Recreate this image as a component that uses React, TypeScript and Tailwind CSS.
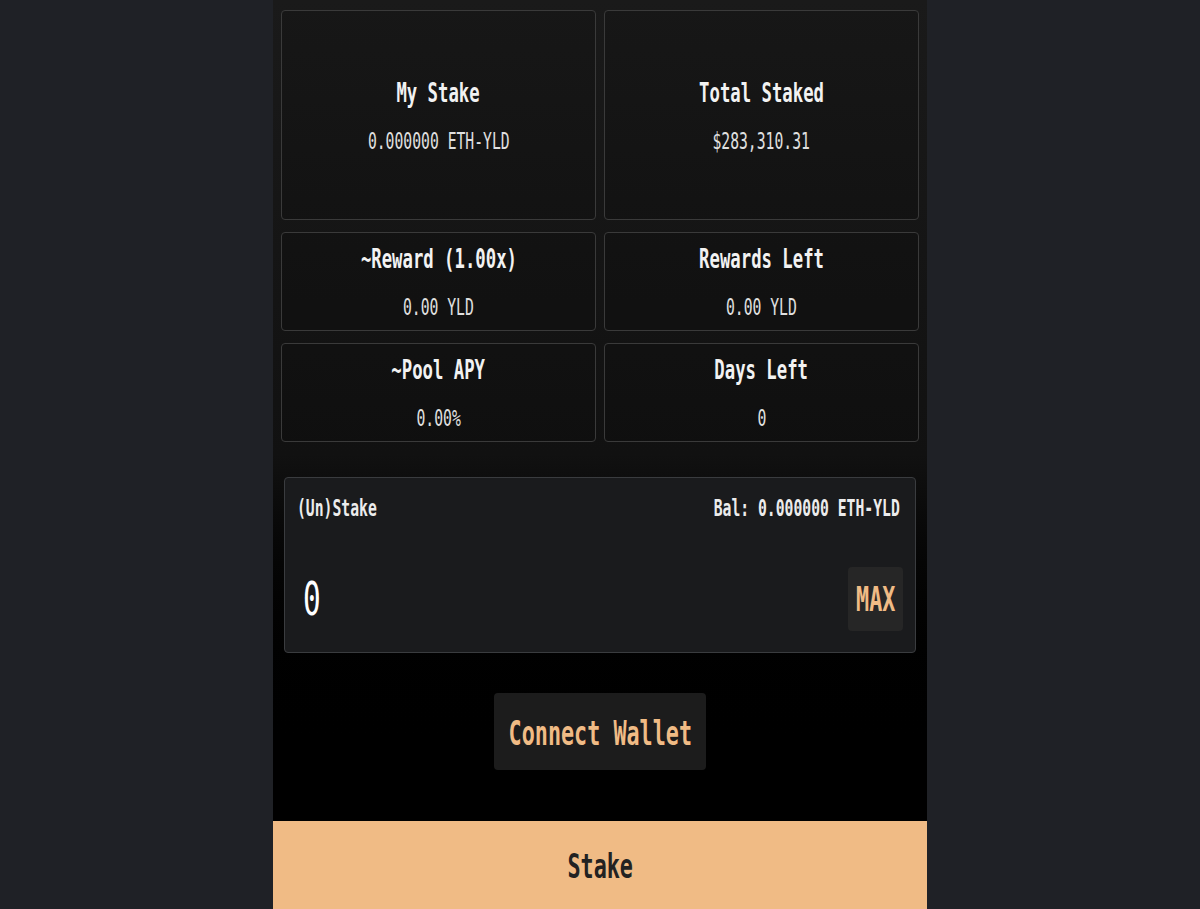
import type { ReactNode } from "react"

const mono = "font-['DejaVu_Sans_Mono','Liberation_Mono',monospace]"

// narrow mono text: the glyphs are squeezed horizontally
function Narrow({ children, className = "" }: { children: ReactNode; className?: string }) {
  return <span className={`inline-block scale-x-[0.64] whitespace-nowrap ${className}`}>{children}</span>
}

function StatCard({ title, value, tall = false }: { title: string; value: string; tall?: boolean }) {
  return (
    <div
      className={`flex flex-col items-center justify-center rounded-sm border border-[#3a3a3a] bg-black/10 ${
        tall ? "h-[210px]" : "h-[99px]"
      }`}
    >
      <div className="text-[27px] font-bold leading-[30px] text-[#f2f2f2]">
        <Narrow>{title}</Narrow>
      </div>
      <div className="mt-[21px] text-[23px] leading-[24px] text-[#e0e0e0]">
        <Narrow>{value}</Narrow>
      </div>
    </div>
  )
}

export default function App() {
  return (
    <div className={`min-h-[909px] bg-[#1f2126] ${mono}`}>
      <div className="mx-auto flex min-h-[909px] w-[654px] flex-col bg-linear-to-b from-[#1a1a1a] via-[#111111] via-50% to-black to-[84%]">
        {/* Stats */}
        <div className="flex flex-col gap-[12px] px-2 pt-[10px]">
          <div className="grid grid-cols-2 gap-2">
            <StatCard title="My Stake" value="0.000000 ETH-YLD" tall />
            <StatCard title="Total Staked" value="$283,310.31" tall />
          </div>
          <div className="grid grid-cols-2 gap-2">
            <StatCard title="~Reward (1.00x)" value="0.00 YLD" />
            <StatCard title="Rewards Left" value="0.00 YLD" />
          </div>
          <div className="grid grid-cols-2 gap-2">
            <StatCard title="~Pool APY" value="0.00%" />
            <StatCard title="Days Left" value="0" />
          </div>
        </div>

        {/* (Un)Stake input */}
        <div className="mx-[11px] mt-[35px] rounded-sm border border-[#3a3c3f] bg-[#1a1b1d] pb-[21px]">
          <div className="flex items-center justify-between pl-[12px] pr-[15px] pt-[18px] text-[23px] font-bold leading-[24px] text-[#ececec]">
            <Narrow className="origin-left">(Un)Stake</Narrow>
            <Narrow className="origin-right">Bal: 0.000000 ETH-YLD</Narrow>
          </div>
          <div className="mt-[47px] flex items-center justify-between px-[12px]">
            <div className="ml-[6px] text-[46px] leading-[50px] text-white">
              <Narrow className="origin-left">0</Narrow>
            </div>
            <button className="flex h-[64px] w-[55px] items-center justify-center rounded-sm bg-[#262626] text-[34px] font-bold leading-none text-[#f0bb85]">
              <Narrow>MAX</Narrow>
            </button>
          </div>
        </div>

        {/* Wallet */}
        <div className="mt-[40px] flex justify-center">
          <button className="flex h-[77px] w-[212px] items-center justify-center rounded-sm bg-[#1c1c1c] pt-[2px] text-[34px] font-bold leading-none text-[#f0bb85]">
            <Narrow>Connect Wallet</Narrow>
          </button>
        </div>

        <button className="mt-[51px] flex h-[88px] w-full items-center justify-center bg-[#f0bb85] pt-[2px] text-[34px] font-bold leading-none text-[#222222]">
          <Narrow>Stake</Narrow>
        </button>
      </div>
    </div>
  )
}
